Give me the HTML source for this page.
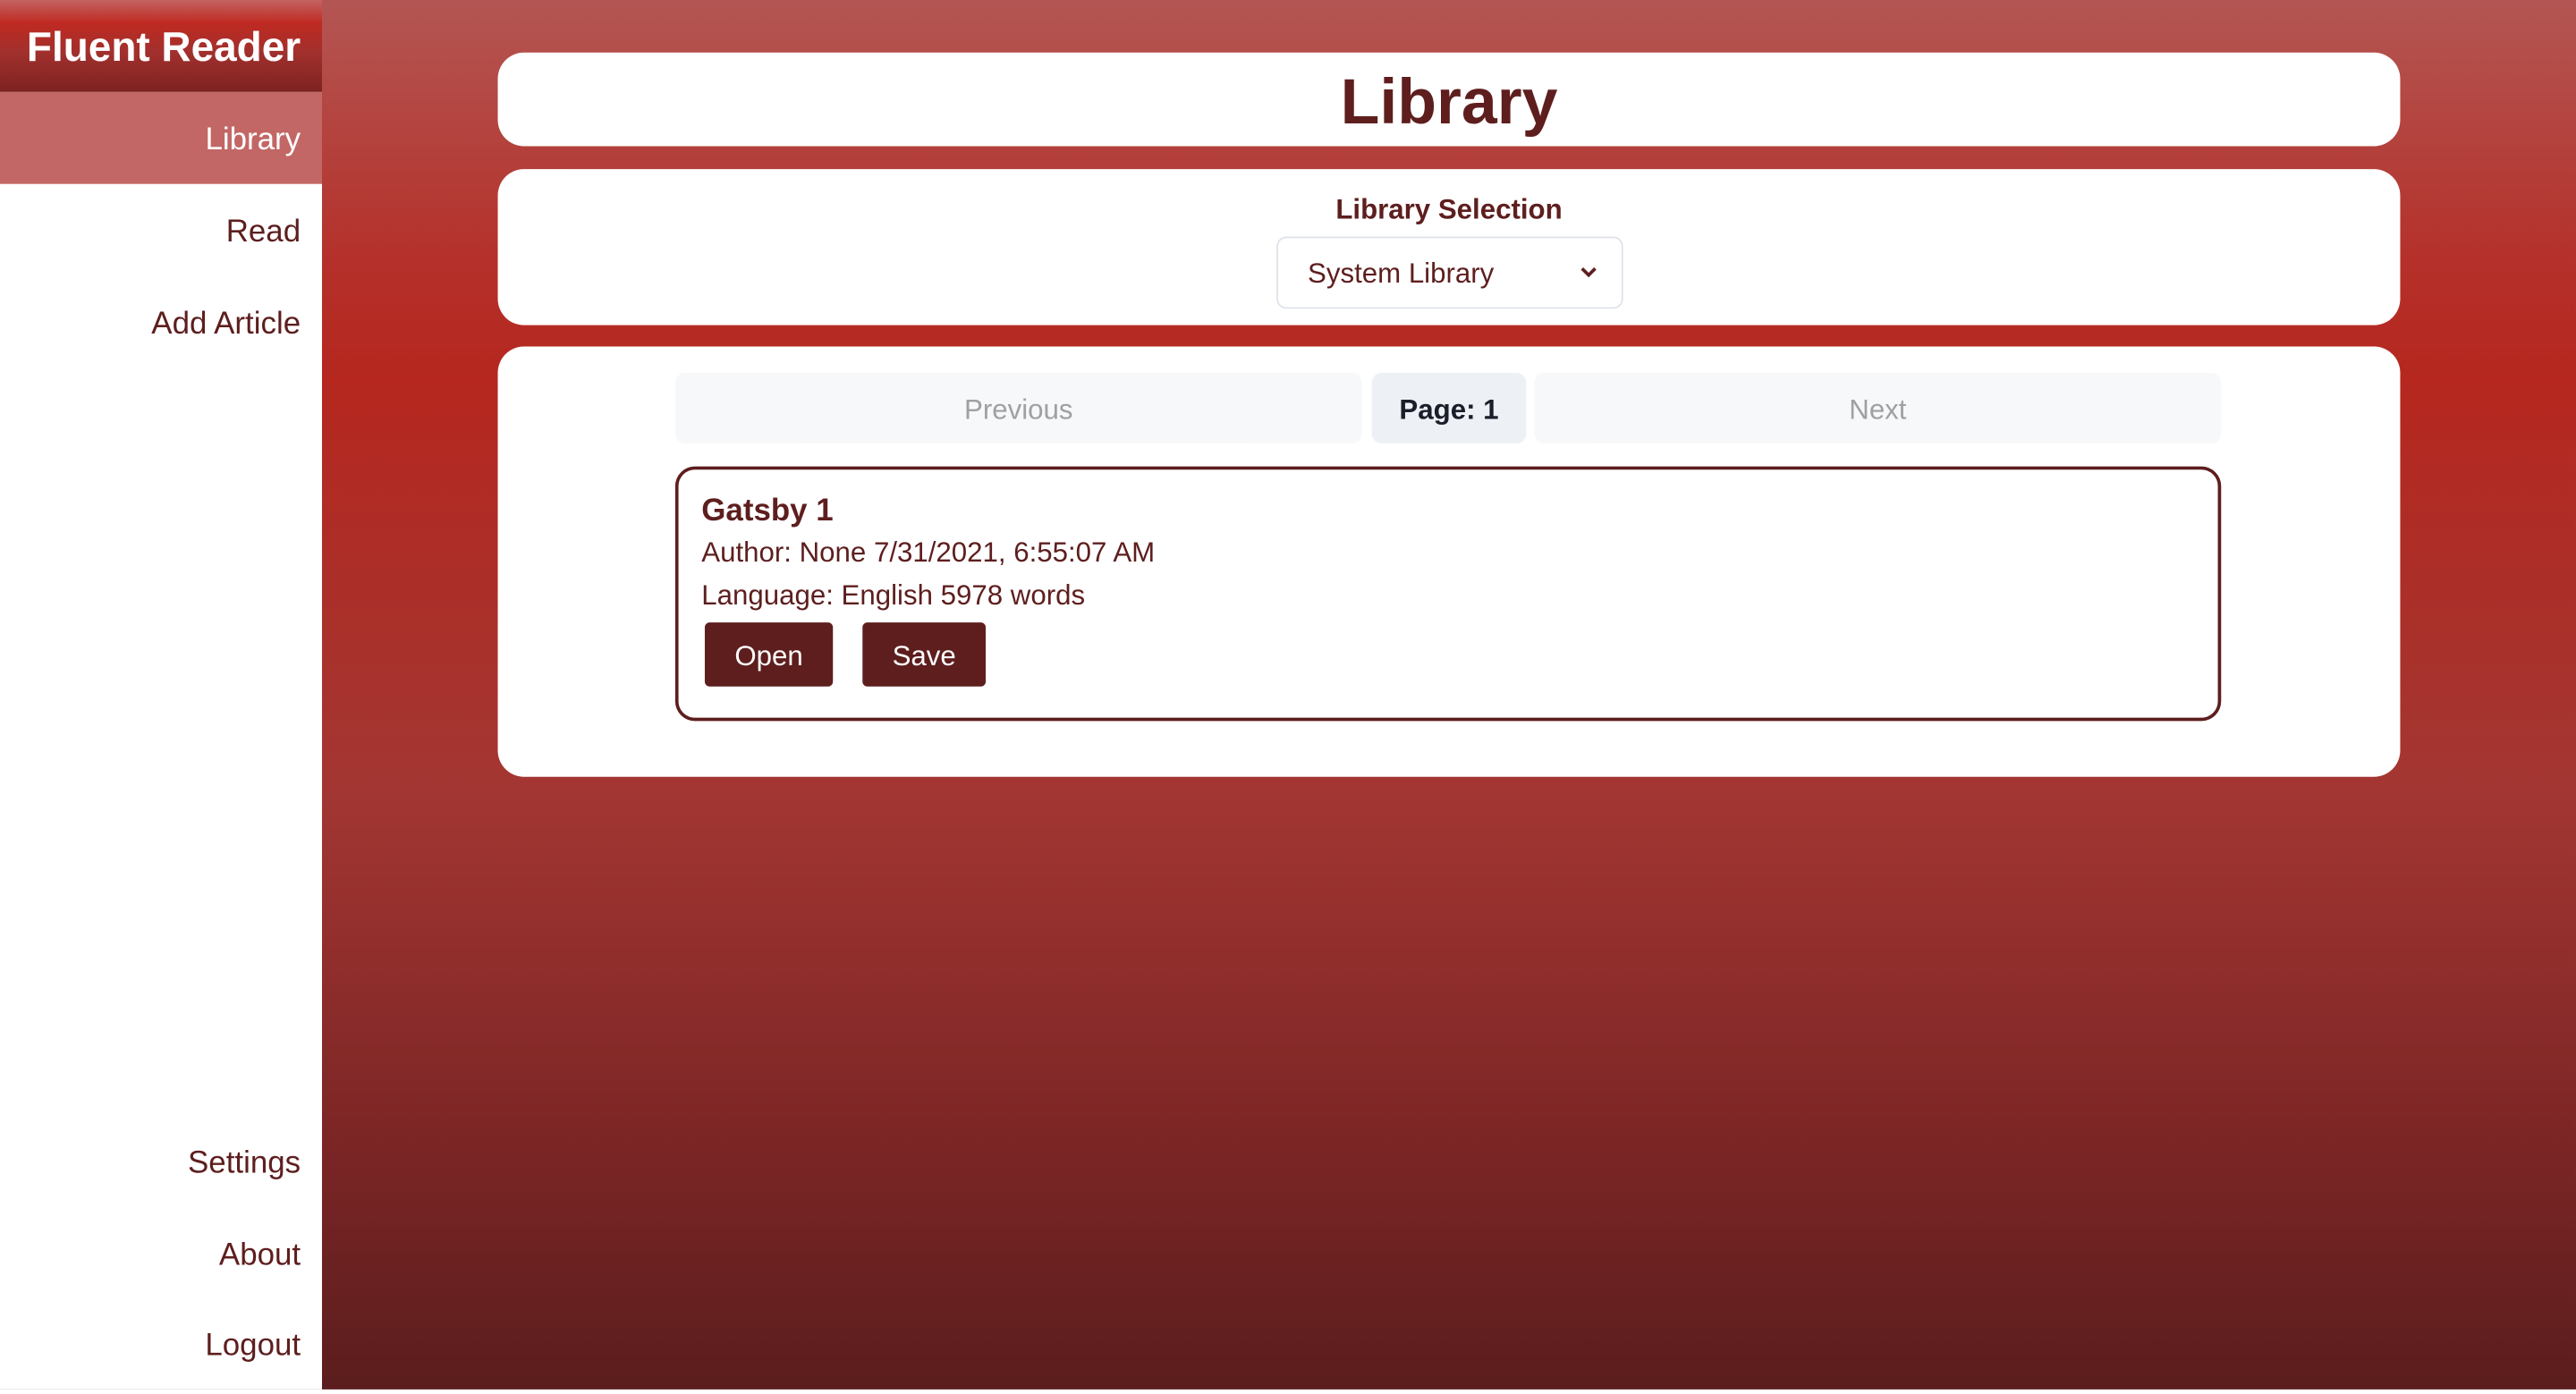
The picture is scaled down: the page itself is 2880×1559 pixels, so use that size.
<!DOCTYPE html>
<html><head><meta charset="utf-8"><style>
html,body{margin:0;padding:0;width:2880px;height:1554px;overflow:hidden;}
#w{position:absolute;left:0;top:0;width:1568px;height:846px;transform:scale(1.83673);transform-origin:0 0;
font-family:"Liberation Sans",sans-serif;
background:linear-gradient(180deg,#b35653 0px,#b5302a 160px,#b5271f 230px,#a33632 480px,#7b2525 700px,#5b1d1d 846px);}
#side{position:absolute;left:0;top:0;width:196px;height:846px;background:#fff;}
#hdr{height:56px;background:linear-gradient(180deg,#c36361 0px,#bf2a22 14px,#a1302d 32px,#7d2222 56px);color:#fff;font-weight:bold;font-size:25px;text-align:right;padding-right:13px;line-height:59px;box-sizing:border-box;}
.ni{height:56px;line-height:59px;text-align:right;padding-right:13px;font-size:19px;color:#5e1e1e;}
.ni.act{background:#c26765;color:#fff;}
.card{position:absolute;left:303px;width:1158px;background:#fff;border-radius:16px;}
.t{color:#5e1e1e;}
</style></head><body><div id="w">
<div id="side">
<div id="hdr">Fluent Reader</div>
<div class="ni act">Library</div>
<div class="ni">Read</div>
<div class="ni">Add Article</div>
<div class="ni" style="position:absolute;top:679px;right:0">Settings</div>
<div class="ni" style="position:absolute;top:735px;right:0">About</div>
<div class="ni" style="position:absolute;top:790px;right:0">Logout</div>
</div>
<div class="card" style="top:32px;height:57px;text-align:center;">
<div class="t" style="font-weight:bold;font-size:39px;line-height:62px;">Library</div></div>
<div class="card" style="top:103px;height:95px;">
<div class="t" style="position:absolute;top:15px;width:100%;text-align:center;font-weight:bold;font-size:17px;">Library Selection</div>
<div style="position:absolute;left:474px;top:41px;width:209px;height:42px;border:1px solid #dfe3ea;border-radius:6px;">
<span class="t" style="position:absolute;left:18px;top:12px;font-size:17px;">System Library</span>
<svg style="position:absolute;left:183px;top:16px" width="12" height="9" viewBox="0 0 12 9"><path d="M2 2.5 L6 6.5 L10 2.5" fill="none" stroke="#5e1e1e" stroke-width="2"/></svg>
</div></div>
<div class="card" style="top:211px;height:262px;">
<div style="position:absolute;left:108px;top:16px;width:418px;height:43px;background:#f7f8fa;border-radius:6px;text-align:center;line-height:46px;color:#a0a0a3;font-size:17px;">Previous</div>
<div style="position:absolute;left:532px;top:16px;width:94px;height:43px;background:#edf0f5;border-radius:6px;text-align:center;line-height:46px;color:#1a1e2a;font-size:17px;font-weight:bold;">Page: 1</div>
<div style="position:absolute;left:631px;top:16px;width:418px;height:43px;background:#f7f8fa;border-radius:6px;text-align:center;line-height:46px;color:#a0a0a3;font-size:17px;">Next</div>
<div style="position:absolute;left:108px;top:73px;width:937px;height:151px;border:2px solid #5e1e1e;border-radius:12px;">
<div class="t" style="position:absolute;left:14px;top:15px;font-weight:bold;font-size:19px;">Gatsby 1</div>
<div class="t" style="position:absolute;left:14px;top:41px;font-size:17px;">Author: None 7/31/2021, 6:55:07 AM</div>
<div class="t" style="position:absolute;left:14px;top:67px;font-size:17px;">Language: English 5978 words</div>
<div style="position:absolute;left:16px;top:93px;width:78px;height:39px;background:#5e1e1e;border-radius:3px;color:#fff;font-size:17px;text-align:center;line-height:42px;">Open</div>
<div style="position:absolute;left:112px;top:93px;width:75px;height:39px;background:#5e1e1e;border-radius:3px;color:#fff;font-size:17px;text-align:center;line-height:42px;">Save</div>
</div></div>
</div></body></html>
